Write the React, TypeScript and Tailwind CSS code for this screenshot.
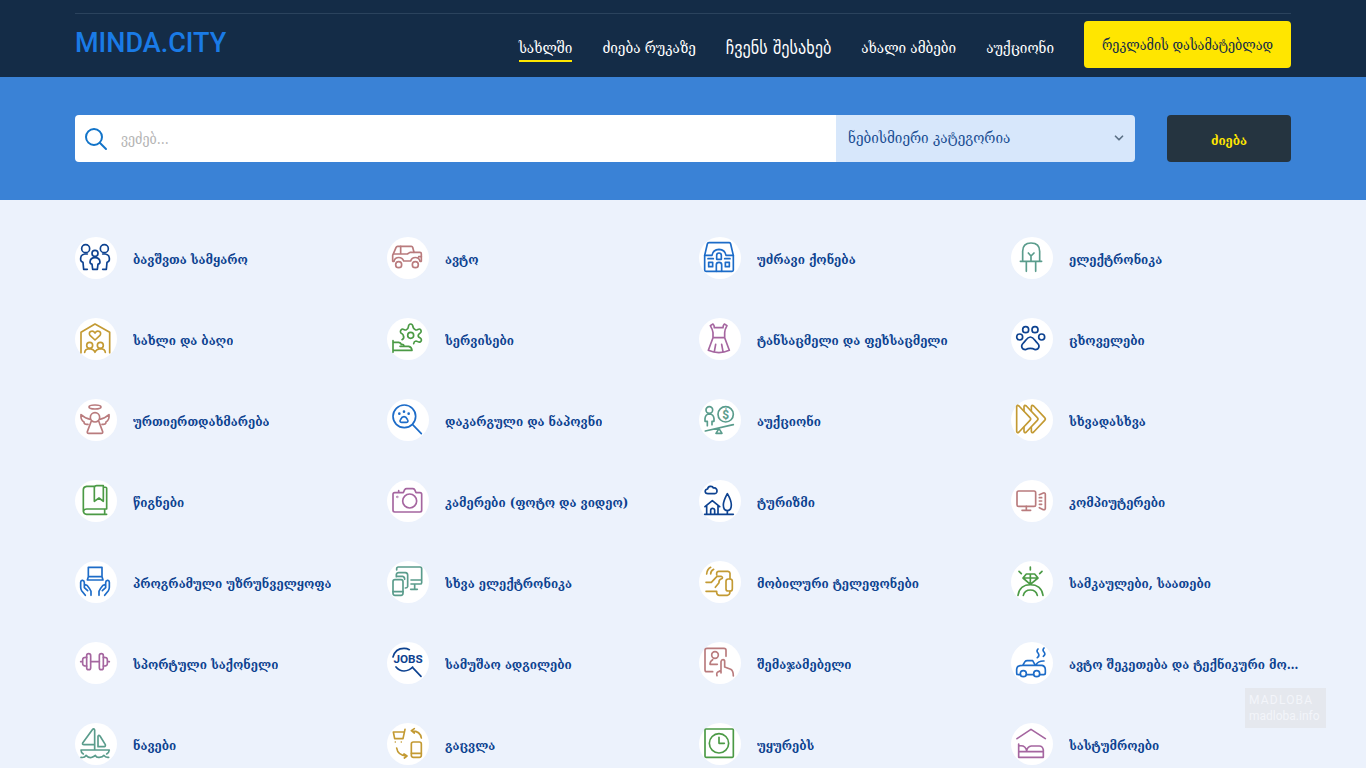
import React from 'react';
import { ChevronDown } from 'lucide-react';

const navy = 'text-[#0d4290]';
const rose = 'text-[#b97b7d]';
const blue = 'text-[#1d6cc8]';
const teal = 'text-[#5a9c8c]';
const gold = 'text-[#c39a33]';
const green = 'text-[#4b9a45]';
const purple = 'text-[#a566a0]';

const navLinks = [
  { label: 'სახლში', className: 'border-[#ffe600]' },
  { label: 'ძიება რუკაზე', className: 'border-transparent' },
  { label: 'ჩვენს შესახებ', className: "border-transparent text-lg/6 font-['DejaVu_Sans_Condensed','DejaVu_Sans',sans-serif]" },
  { label: 'ახალი ამბები', className: 'border-transparent' },
  { label: 'აუქციონი', className: 'border-transparent' },
];

// Icons are drawn on a 90x90 grid
const categories = [
  {
    name: 'ბავშვთა სამყარო',
    color: navy,
    icon: (
      <>
        <circle cx="17" cy="20" r="12" />
        <circle cx="73" cy="20" r="12" />
        <circle cx="45" cy="34" r="9" />
        <path d="M22 36 H14 Q3 38 2 48 V54 Q3 60 9 61 L11 82 H22 M68 36 H76 Q87 38 88 48 V54 Q87 60 81 61 L79 82 H68" />
        <path d="M38 82 L36 66 Q30 66 30 60 Q31 47 45 47 Q59 47 60 60 Q60 66 54 66 L52 82 Z" />
      </>
    ),
  },
  {
    name: 'ავტო',
    color: rose,
    icon: (
      <>
        <path d="M6 58 H2 V40 L12 17 Q13 13 17 13 H58 Q61 13 62 16 L66 31 H84 Q88 31 88 35 V58 H84" />
        <path d="M6 57 C10 43 30 43 35 57 H56 C60 43 80 43 84 57 M26 13 V36 M5 36 H46 L54 31 H66 M80 44 H88" />
        <circle cx="20" cy="68" r="9" />
        <circle cx="70" cy="68" r="9" />
      </>
    ),
  },
  {
    name: 'უძრავი ქონება',
    color: blue,
    icon: (
      <>
        <path d="M2 40 L10 6 Q11 2 15 2 H76 Q79 2 80 6 L88 40 V84 Q88 88 84 88 H6 Q2 88 2 84 Z" />
        <path d="M2 40 H24 Q27 23 45 22 Q63 23 66 40 H88 M38 52 V40 Q38 33 45 33 Q52 33 52 40 V52 Z" />
        <path d="M37 88 V68 Q37 61 45 61 Q53 61 53 68 V88 M12 50 H28 M62 50 H78 M14 61 H26 V74 H14 Z M64 61 H76 V74 H64 Z" />
      </>
    ),
  },
  {
    name: 'ელექტრონიკა',
    color: teal,
    icon: <path d="M20 58 V28 Q20 3 45 3 Q71 3 71 28 V58 M13 58 H77 M31 58 V88 M59 58 V88 M37 33 L45 42 L54 33 M45 42 V58" />,
  },
  {
    name: 'სახლი და ბაღი',
    color: gold,
    icon: (
      <>
        <path d="M3 89 V28 L45 3 L89 28 V89 M45 51 L30 37 C23 27 37 19 45 30 C53 19 67 27 60 37 Z" />
        <circle cx="29" cy="67" r="9" />
        <circle cx="61" cy="67" r="9" />
        <path d="M14 88 Q15 78 29 77 Q42 79 45 88 Q48 79 61 77 Q75 78 76 88" />
      </>
    ),
  },
  {
    name: 'სერვისები',
    color: green,
    icon: (
      <>
        <circle cx="56" cy="37" r="9" />
        <path d="M30 50 Q38 46 34 38 Q34 34 30 32 C24 30 24 24 28 20 C32 14 36 22 42 21 Q49 18 49 12 Q50 3 56 3 Q62 3 63 12 Q64 18 71 21 C77 22 81 14 86 20 C90 26 86 30 81 33 Q76 38 81 43 C88 46 90 50 87 55 C82 62 77 54 72 54 Q66 55 65 62" />
        <path d="M3 53 V88 M3 58 H20 Q26 59 28 64 Q36 63 36 70 H24 M36 70 H50 Q59 72 60 82 H3" />
      </>
    ),
  },
  {
    name: 'ტანსაცმელი და ფეხსაცმელი',
    color: purple,
    icon: (
      <path d="M19 8 L27 3 Q31 7 31 14 H57 Q57 7 61 3 L69 8 Q62 20 62 29 V44 H27 V29 Q26 20 19 8 Z M27 44 L13 82 Q45 96 76 82 L62 44 M35 64 L31 86 M53 64 L57 86" />
    ),
  },
  {
    name: 'ცხოველები',
    color: navy,
    icon: (
      <>
        <circle cx="29" cy="20" r="9" />
        <circle cx="57" cy="20" r="9" />
        <circle cx="11" cy="42" r="9" />
        <circle cx="77" cy="42" r="9" />
        <path d="M43 42 C54 42 56 54 64 60 C73 68 69 80 58 80 Q50 76 43 76 Q36 76 28 80 C17 80 13 68 22 60 C30 54 32 42 43 42 Z" />
      </>
    ),
  },
  {
    name: 'ურთიერთდახმარება',
    color: rose,
    icon: (
      <>
        <ellipse cx="45" cy="9" rx="18" ry="6" />
        <circle cx="45" cy="40" r="14" />
        <path d="M34 51 L22 83 Q21 88 26 88 H64 Q69 88 68 83 L56 51" />
        <path d="M31 46 Q16 44 3 32 Q1 48 12 54 Q12 63 24 61 M59 46 Q74 44 87 32 Q89 48 78 54 Q78 63 66 61" />
      </>
    ),
  },
  {
    name: 'დაკარგული და ნაპოვნი',
    color: blue,
    icon: (
      <>
        <circle cx="37" cy="37" r="34" />
        <path d="M62 62 L88 89 M36 38 Q42 38 46 46 Q51 54 43 55 H29 Q21 54 26 46 Q30 38 36 38 Z" />
        <g strokeWidth="8">
          <path d="M22 29 V29.1 M36 23 V23.1 M50 29 V29.1" />
        </g>
      </>
    ),
  },
  {
    name: 'აუქციონი',
    color: teal,
    icon: (
      <>
        <circle cx="16" cy="18" r="10" />
        <circle cx="65" cy="31" r="23" />
        <path d="M10 65 V52 H3 V44 Q4 31 16 30 Q29 31 30 44 V52 H24 V62 M4 81 L88 62 M45 74 L36 88 H54 Z" />
        <text x="65" y="44" textAnchor="middle" fontSize="36" fontWeight="700" fill="currentColor" stroke="none" fontFamily="Roboto, sans-serif">$</text>
      </>
    ),
  },
  {
    name: 'სხვადასხვა',
    color: gold,
    icon: (
      <>
        <path d="M2 8 Q3 1 9 6 L42 41 Q46 45 42 49 L9 84 Q3 89 2 82 Z" />
        <path d="M24 20 V8 Q25 1 31 6 L64 41 Q68 45 64 49 L31 84 Q25 89 24 82 V70" />
        <path d="M46 20 V8 Q47 1 53 6 L86 41 Q90 45 86 49 L53 84 Q47 89 46 82 V70" />
      </>
    ),
  },
  {
    name: 'წიგნები',
    color: green,
    icon: (
      <path d="M43 4 H20 Q10 5 10 14 V78 Q11 88 20 88 H80 M10 80 Q11 72 20 72 H80 V10 Q80 6 71 6 M74 72 V88 M43 49 V8 Q44 2 50 2 H70 V49 L57 39 Z" />
    ),
  },
  {
    name: 'კამერები (ფოტო და ვიდეო)',
    color: purple,
    icon: (
      <>
        <path d="M8 23 H34 L38 14 Q40 11 44 11 H62 Q66 11 68 14 L72 23 H84 Q89 23 89 28 V76 Q89 81 84 81 H8 Q3 81 3 76 V28 Q3 23 8 23 Z M20 23 V17" />
        <circle cx="53" cy="48" r="21" />
        <circle cx="16" cy="36" r="1" />
      </>
    ),
  },
  {
    name: 'ტურიზმი',
    color: navy,
    icon: (
      <path d="M12 26 C1 26 1 13 11 12 C12 2 26 2 28 9 C36 7 41 14 38 22 Q36 26 32 26 Z M3 65 L25 47 L47 65 M8 62 V88 M42 62 V88 M20 88 V76 Q20 70 26 70 Q32 70 32 76 V88 M70 26 Q58 48 58 60 Q58 76 70 77 Q82 76 82 60 Q82 46 70 26 Z M70 77 V88 M2 88 H88" />
    ),
  },
  {
    name: 'კომპიუტერები',
    color: rose,
    icon: (
      <>
        <rect x="3" y="18" width="56" height="46" rx="5" />
        <path d="M31 64 V74 M18 76 H44 M70 29 L82 24 Q88 23 88 28 V70 Q88 75 82 74 L70 68 M70 38 H77 M70 48 H77 M70 58 H77" />
      </>
    ),
  },
  {
    name: 'პროგრამული უზრუნველყოფა',
    color: blue,
    icon: (
      <>
        <path d="M25 32 V4 H66 V32 M25 32 H66 L69 42 H22 Z" />
        <path d="M16 88 L5 74 Q2 70 2 64 V49 Q3 42 8 43 Q13 44 13 50 V65 L23 74 M33 88 V76 Q31 70 21 58 Q15 54 13 60" />
        <path d="M74 88 L85 74 Q88 70 88 64 V49 Q87 42 82 43 Q77 44 77 50 V65 L67 74 M57 88 V76 Q59 70 69 58 Q75 54 77 60" />
      </>
    ),
  },
  {
    name: 'სხვა ელექტრონიკა',
    color: teal,
    icon: (
      <>
        <rect x="3" y="41" width="30" height="47" rx="6" />
        <path d="M14 12 V8 Q14 3 19 3 H84 Q89 3 89 8 V50 Q89 54 84 54 H57 M57 42 H89 M68 54 V70 M56 70 H76 M3 77 H33 M13 32 V26 Q14 20 20 20 H40 Q47 21 47 27 V62 Q46 66 40 66 M13 31 H32 Q38 32 38 40" />
      </>
    ),
  },
  {
    name: 'მობილური ტელეფონები',
    color: gold,
    icon: (
      <>
        <rect x="66" y="39" width="19" height="36" rx="7" />
        <path d="M8 24 Q9 10 20 4 M20 24 Q20 15 29 10 M38 26 V21 Q39 16 44 16 H72 Q78 17 78 22 V38 M6 49 H22 L39 31 H51 Q60 35 51 39 Q44 42 45 50 L34 64 M6 76 H38 V80 Q39 88 46 88 H70 Q78 87 78 76" />
      </>
    ),
  },
  {
    name: 'სამკაულები, საათები',
    color: green,
    icon: (
      <path d="M43 3 V12 M9 16 L16 23 M78 16 L71 23 M21 36 L31 24 H56 L66 36 L43 55 Z M21 36 H66 M43 24 V55 M6 88 C9 66 25 56 43 56 C62 56 78 66 81 88 M22 88 Q26 72 43 72 Q60 72 64 88" />
    ),
  },
  {
    name: 'სპორტული საქონელი',
    color: purple,
    icon: (
      <>
        <rect x="20" y="20" width="12" height="48" rx="6" />
        <rect x="58" y="20" width="12" height="48" rx="6" />
        <path d="M32 44 H58 M20 31 Q8 30 8 38 V50 Q8 58 20 57 M2 44 H8 M70 31 Q82 30 82 38 V50 Q82 58 70 57 M82 44 H88" />
      </>
    ),
  },
  {
    name: 'სამუშაო ადგილები',
    color: navy,
    icon: (
      <>
        <path d="M3 30 Q10 4 36 4 Q45 4 52 8 M12 60 Q22 72 36 72 Q52 71 62 60 M62 62 L87 88" />
        <text x="48" y="49" textAnchor="middle" fontSize="35" fontWeight="700" fill="currentColor" stroke="none" fontFamily="Roboto, sans-serif">JOBS</text>
      </>
    ),
  },
  {
    name: 'შემაჯამებელი',
    color: rose,
    icon: (
      <>
        <circle cx="33" cy="24" r="10" />
        <path d="M26 74 H8 Q3 74 3 68 V10 Q3 4 9 4 H60 Q66 4 66 10 V28 M26 38 Q18 42 18 52 H40 M51 78 V44 Q52 38 57 38 Q62 38 62 44 V60 L80 67 Q88 71 88 87 M51 70 L44 74 Q36 76 39 86" />
      </>
    ),
  },
  {
    name: 'ავტო შეკეთება და ტექნიკური მომსახურება',
    color: blue,
    icon: (
      <>
        <circle cx="22" cy="80" r="9" />
        <circle cx="62" cy="80" r="9" />
        <path d="M13 83 H6 Q2 83 2 77 V66 Q3 57 12 56 L20 55 L27 44 Q29 41 34 41 H50 L58 55 M20 55 H78 Q88 57 88 68 V78 Q88 83 83 83 H72 M32 83 H52 M60 53 Q68 41 84 42 M66 6 Q60 12 66 18 Q72 26 64 32 M84 3 Q78 9 84 15 Q90 22 82 28" />
      </>
    ),
  },
  {
    name: 'ნავები',
    color: teal,
    icon: (
      <path d="M44 66 V6 Q42 0 37 5 L8 45 Q6 50 12 50 H44 M54 56 V25 Q56 20 60 24 L76 50 Q77 56 73 56 Z M10 78 Q3 74 3 66 H88 Q87 74 80 78 M3 88 Q14 90 18 82 Q28 92 36 88 Q44 84 46 82 Q50 90 58 88 Q68 88 72 82 Q76 89 86 88" />
    ),
  },
  {
    name: 'გაცვლა',
    color: gold,
    icon: (
      <>
        <rect x="58" y="42" width="30" height="46" rx="6" />
        <path d="M36 12 H4 L8 32 H33 L39 4 M10 42 V42.1 M28 42 V42.1 M88 30 Q85 10 60 8 M67 2 L58 8 L67 15 M14 60 Q17 82 44 84 M36 78 L45 84 L37 90 M58 76 H88" />
      </>
    ),
  },
  {
    name: 'უყურებს',
    color: green,
    icon: (
      <>
        <rect x="3" y="3" width="85" height="85" rx="3" />
        <circle cx="45" cy="46" r="29" />
        <path d="M45 28 V46 H61" />
      </>
    ),
  },
  {
    name: 'სასტუმროები',
    color: purple,
    icon: (
      <path d="M3 32 L45 4 L88 32 M8 48 V88 H82 V66 Q80 54 70 54 H46 Q34 56 32 68 M8 54 Q28 50 32 68 M8 71 H82" />
    ),
  },
];

const Header = () => (
  <header className="bg-[#142c47] px-[75px] pt-[13px] pb-[9px]">
    <div className="h-[8px] border-t border-[#2b435d]"></div>
    <div className="flex items-center justify-between">
      <a href="#" className="pb-1 font-['Roboto',sans-serif] text-[27px] leading-8 font-medium text-[#1a7be6]">
        MINDA.CITY
      </a>
      <div className="flex items-center gap-[30px]">
        <nav className="flex gap-[30px] pt-2 text-[15px] leading-6 text-white">
          {navLinks.map((link) => (
            <a key={link.label} href="#" className={`border-b-2 ${link.className}`}>
              {link.label}
            </a>
          ))}
        </nav>
        <button className="h-[47px] w-[207px] rounded bg-[#ffe600] text-sm whitespace-nowrap text-[#142c47]">
          რეკლამის დასამატებლად
        </button>
      </div>
    </div>
  </header>
);

const SearchBar = () => (
  <section className="bg-[#3a82d6] px-[75px] py-[38px]">
    <form className="flex gap-8">
      <div className="flex h-[47px] grow overflow-hidden rounded">
        <label className="flex grow items-center gap-3 bg-white pl-[10px]">
          <svg viewBox="0 0 24 24" className="size-6 shrink-0 text-[#1274c9]" fill="none" stroke="currentColor" strokeWidth="2" strokeLinecap="round">
            <circle cx="9" cy="10" r="8" />
            <path d="M15 16 L21 22" />
          </svg>
          <input
            type="text"
            aria-label="ძიება"
            placeholder="ვეძებ..."
            className="grow text-sm text-[#0d4290] outline-none placeholder:text-[#b5b5b5]"
          />
        </label>
        <div className="relative w-[299px]">
          <select aria-label="კატეგორია" className="h-full w-full appearance-none bg-[#d7e7fb] pr-8 pl-3 text-[15px] text-[#1c4f94]">
            <option>ნებისმიერი კატეგორია</option>
          </select>
          <ChevronDown size={14} className="pointer-events-none absolute top-4 right-[9px] text-[#5c7186]" strokeWidth={3} />
        </div>
      </div>
      <button type="submit" className="h-[47px] w-[124px] rounded bg-[#253440] pt-1 text-[13px] font-bold text-[#ffe600]">
        ძიება
      </button>
    </form>
  </section>
);

const App = () => {
  return (
    <div className="min-h-screen bg-[#ecf2fc] font-['DejaVu_Serif_Condensed','DejaVu_Serif',serif]">
      <Header />
      <SearchBar />

      <main className="grid grid-cols-4 gap-x-8 gap-y-[39px] px-[75px] pt-[37px]">
        {categories.map((category) => (
          <a key={category.name} href="#" className="flex min-w-0 items-center gap-4">
            <span className="size-[42px] shrink-0 rounded-full bg-white p-[5px]">
              <svg
                viewBox="0 0 90 90"
                className={`size-[30px] overflow-visible ${category.color}`}
                fill="none"
                stroke="currentColor"
                strokeWidth="5"
                strokeLinecap="round"
                strokeLinejoin="round"
              >
                {category.icon}
              </svg>
            </span>
            <span className="-mr-2 truncate pt-1 text-[13px] leading-6 font-bold text-[#0d4290]">{category.name}</span>
          </a>
        ))}
      </main>

      {/* Watermark */}
      <div className="fixed right-10 bottom-10 w-[81px] bg-[#e5e8ee] px-1 py-1 font-['Roboto',sans-serif] text-xs leading-4 text-[#f3f5fa]">
        <div className="tracking-widest">MADLOBA</div>
        <div>madloba.info</div>
      </div>
    </div>
  );
};

export default App;
